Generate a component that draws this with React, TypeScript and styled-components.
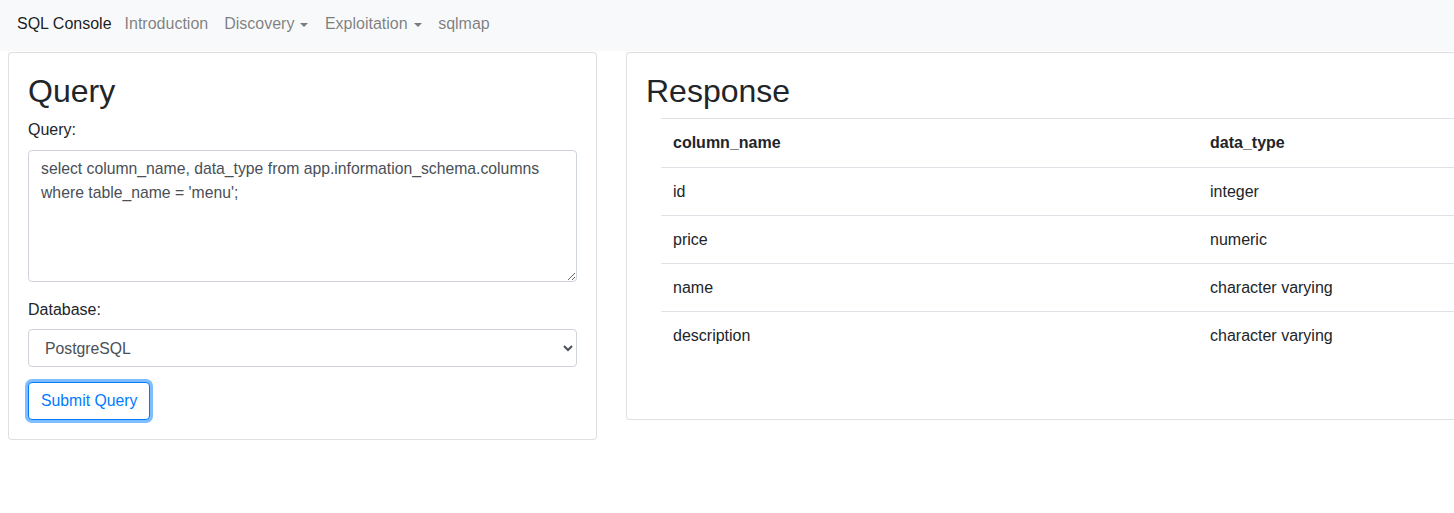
import React from "react";
import styled, { createGlobalStyle } from "styled-components";

const Global = createGlobalStyle`
  html, body {
    margin: 0;
    padding: 0;
    overflow: hidden;
    background: #fff;
  }
  body {
    font-family: "Liberation Sans", Arial, Helvetica, sans-serif;
    font-size: 16px;
    line-height: 24px;
    color: #212529;
  }
  * { box-sizing: border-box; }
`;

const Navbar = styled.nav`
  display: flex;
  align-items: flex-start;
  height: 51px;
  padding: 12px 16px 0 17px;
  background: #f8f9fa;
`;

const Brand = styled.a`
  color: rgba(0, 0, 0, 0.9);
  text-decoration: none;
  line-height: 24px;
  margin-right: 5px;
  white-space: nowrap;
`;

const NavLink = styled.a`
  display: flex;
  align-items: center;
  padding: 0 8px;
  color: rgba(0, 0, 0, 0.5);
  text-decoration: none;
  line-height: 24px;
  white-space: nowrap;
`;

const Caret = styled.span`
  display: inline-block;
  margin-left: 6px;
  margin-right: 0.5px;
  margin-top: 1px;
  border-top: 4.8px solid rgba(0, 0, 0, 0.5);
  border-left: 4.8px solid transparent;
  border-right: 4.8px solid transparent;
`;

const Main = styled.div`
  display: flex;
  align-items: flex-start;
  gap: 29px;
  padding: 1px 0 0 8px;
  width: 1900px;
`;

const Card = styled.div<{ $width: number }>`
  flex: 0 0 ${(p) => p.$width}px;
  width: ${(p) => p.$width}px;
  border: 1px solid rgba(0, 0, 0, 0.125);
  border-radius: 4px;
  background: #fff;
  padding: 19px 19px 19px 19px;
`;

const Title = styled.h2`
  margin: 0 0 8px 0;
  font-size: 32px;
  font-weight: 400;
  line-height: 38px;
  color: #212529;
`;

const FormGroup = styled.div`
  display: flex;
  flex-direction: column;
  margin-bottom: 16px;
`;

const Label = styled.label<{ $gap?: number }>`
  line-height: 24px;
  margin-bottom: ${(p) => p.$gap ?? 8}px;
`;

const controlFont = `
  font-family: "Liberation Sans", Arial, Helvetica, sans-serif;
  font-size: 15.75px;
  line-height: 24px;
`;

const TextArea = styled.textarea`
  display: block;
  width: 100%;
  height: 132px;
  padding: 6px 12px;
  ${controlFont}
  color: #495057;
  border: 1px solid #ced4da;
  border-radius: 4px;
  background: #fff;
  resize: vertical;
  outline: none;
`;

const Select = styled.select`
  display: block;
  width: 100%;
  height: 38px;
  padding: 6px 12px;
  ${controlFont}
  color: #495057;
  border: 1px solid #ced4da;
  border-radius: 4px;
  background: #fff;
  outline: none;
`;

const Button = styled.button`
  display: inline-block;
  margin-top: -1px;
  padding: 6px 12px;
  ${controlFont}
  color: #007bff;
  background: #fff;
  border: 1px solid #007bff;
  border-radius: 4px;
  box-shadow: 0 0 0 3px rgba(0, 123, 255, 0.5);
  cursor: pointer;
  outline: none;
`;

const TableWrap = styled.div`
  margin: 0 0 41px 15px;
`;

const Table = styled.table`
  width: 100%;
  border-collapse: collapse;
  color: #212529;
`;

const Th = styled.th<{ $w?: number }>`
  text-align: left;
  font-weight: 700;
  padding: 12px;
  line-height: 24px;
  border-top: 1px solid #dee2e6;
  border-bottom: 1px solid #dee2e6;
  ${(p) => (p.$w ? `width: ${p.$w}px;` : "")}
`;

const Td = styled.td`
  padding: 12px;
  line-height: 23px;
  border-top: 1px solid #dee2e6;
`;

const rows: [string, string][] = [
  ["id", "integer"],
  ["price", "numeric"],
  ["name", "character varying"],
  ["description", "character varying"],
];

export default function App() {
  return (
    <>
      <Global />
      <Navbar>
        <Brand href="#">SQL Console</Brand>
        <NavLink href="#">Introduction</NavLink>
        <NavLink href="#">
          Discovery
          <Caret />
        </NavLink>
        <NavLink href="#">
          Exploitation
          <Caret />
        </NavLink>
        <NavLink href="#">sqlmap</NavLink>
      </Navbar>
      <Main>
        <Card $width={589}>
          <Title>Query</Title>
          <FormGroup>
            <Label>Query:</Label>
            <TextArea
              defaultValue={
                "select column_name, data_type from app.information_schema.columns\nwhere table_name = 'menu';"
              }
            />
          </FormGroup>
          <FormGroup>
            <Label $gap={7}>Database:</Label>
            <Select defaultValue="PostgreSQL">
              <option>PostgreSQL</option>
              <option>MySQL</option>
              <option>SQLite</option>
            </Select>
          </FormGroup>
          <Button type="button">Submit Query</Button>
        </Card>
        <Card $width={1100}>
          <Title>Response</Title>
          <TableWrap>
            <Table>
              <thead>
                <tr>
                  <Th $w={537}>column_name</Th>
                  <Th>data_type</Th>
                </tr>
              </thead>
              <tbody>
                {rows.map(([a, b]) => (
                  <tr key={a}>
                    <Td>{a}</Td>
                    <Td>{b}</Td>
                  </tr>
                ))}
              </tbody>
            </Table>
          </TableWrap>
        </Card>
      </Main>
    </>
  );
}
